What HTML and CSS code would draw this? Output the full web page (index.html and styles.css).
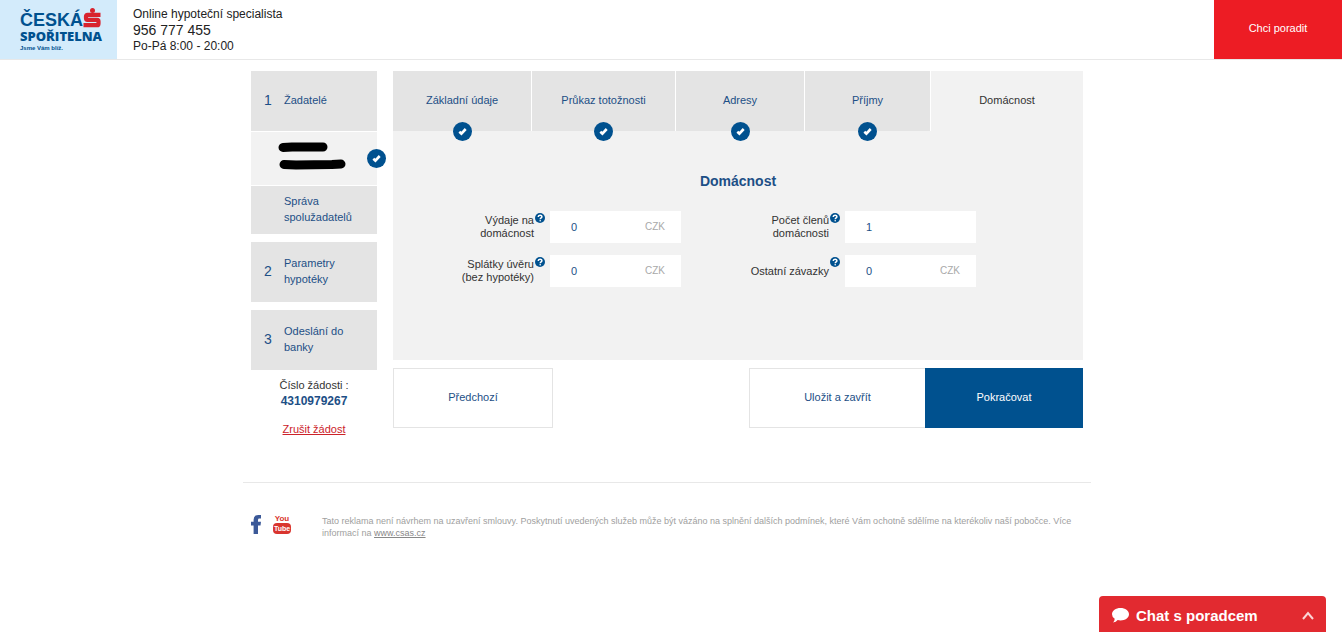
FILE: index.html
```html
<!DOCTYPE html>
<html lang="cs">
<head>
  <meta charset="UTF-8" />
  <meta name="viewport" content="width=device-width, initial-scale=1.0" />
  <title>Online hypotéka - Domácnost</title>
  <link rel="stylesheet" href="styles.css">
</head>
<body>
  <svg class="symboly" aria-hidden="true">
    <symbol id="fajfka" viewBox="0 0 19 19">
      <circle cx="9.5" cy="9.5" r="9.5" fill="#00518f" />
      <path d="M6.3 9.800l2.100 1.800 4.300-4.600" fill="none" stroke="#fff" stroke-width="2.6" />
    </symbol>
    <symbol id="otaznik" viewBox="0 0 10 10">
      <circle cx="5" cy="5" r="5" fill="#00518f" />
      <path d="M3.2 4C3.2 1.7 6.9 1.7 6.9 3.7 6.9 4.9 5.2 4.8 5.2 6.2" fill="none" stroke="#fff" stroke-width="1.5" />
      <circle cx="5.2" cy="7.8" r=".8" fill="#fff" />
    </symbol>
  </svg>

  <header class="hlavicka">
    <a class="logo" href="#">
      <span class="logo-radek">
        <span class="logo-ceska">ČESKÁ</span>
        <svg class="logo-znak" viewBox="0 0 18 20" aria-hidden="true">
          <circle cx="9.500" cy="2.600" r="2.500" fill="#d8232e" />
          <path d="M17.500 6.800H4.500Q3 6.800 3 8.300V10.300Q3 11.900 4.500 11.900H14Q15.500 11.900 15.500 13.400V15.400Q15.500 17.200 14 17.200H.5" fill="none" stroke="#d8232e" stroke-width="4.2" />
        </svg>
      </span>
      <span class="logo-sporitelna">SPOŘITELNA</span>
      <span class="logo-slogan">Jsme Vám blíž.</span>
    </a>
    <div class="kontakt">
      <div>Online hypoteční specialista</div>
      <div class="telefon">956 777 455</div>
      <div>Po-Pá 8:00 - 20:00</div>
    </div>
    <button type="button" class="poradit">Chci poradit</button>
  </header>

  <div class="stranka">
    <div class="obsah">
      <aside class="postup">
        <nav class="kroky">
          <div class="krok-skupina">
            <a class="krok" href="#"><span class="cislo">1</span><span>Žadatelé</span></a>
            <a class="zadatel" href="#" aria-label="Žadatel">
              <svg class="jmeno" viewBox="0 0 68 28" aria-hidden="true">
                <path d="M5 5.500L14 5H45M6 22.500L18 23 54 22.500 63 22" fill="none" stroke="#000" stroke-width="9" stroke-linecap="round" stroke-linejoin="round" />
              </svg>
              <svg class="hotovo"><use href="#fajfka" /></svg>
            </a>
            <a class="sprava" href="#">Správa spolužadatelů</a>
          </div>
          <a class="krok" href="#"><span class="cislo">2</span><span>Parametry hypotéky</span></a>
          <a class="krok" href="#"><span class="cislo">3</span><span>Odeslání do banky</span></a>
        </nav>
        <div class="zadost">
          <div>Číslo žádosti :</div>
          <div class="zadost-cislo">4310979267</div>
          <a class="zrusit" href="#">Zrušit žádost</a>
        </div>
      </aside>

      <main class="formular">
        <section class="panel">
          <nav class="zalozky">
            <a class="zalozka" href="#">Základní údaje<svg class="hotovo"><use href="#fajfka" /></svg></a>
            <a class="zalozka" href="#">Průkaz totožnosti<svg class="hotovo"><use href="#fajfka" /></svg></a>
            <a class="zalozka" href="#">Adresy<svg class="hotovo"><use href="#fajfka" /></svg></a>
            <a class="zalozka" href="#">Příjmy<svg class="hotovo"><use href="#fajfka" /></svg></a>
            <a class="zalozka aktivni" href="#">Domácnost</a>
          </nav>
          <h1>Domácnost</h1>
          <form class="pole-seznam">
            <div class="pole">
              <label for="vydaje">Výdaje na<br>domácnost</label>
              <svg class="napoveda"><use href="#otaznik" /></svg>
              <div class="vstup"><input type="text" id="vydaje" value="0" /><span>CZK</span></div>
            </div>
            <div class="pole">
              <label for="clenove">Počet členů<br>domácnosti</label>
              <svg class="napoveda"><use href="#otaznik" /></svg>
              <div class="vstup"><input type="text" id="clenove" value="1" /></div>
            </div>
            <div class="pole">
              <label for="splatky">Splátky úvěru<br>(bez hypotéky)</label>
              <svg class="napoveda"><use href="#otaznik" /></svg>
              <div class="vstup"><input type="text" id="splatky" value="0" /><span>CZK</span></div>
            </div>
            <div class="pole">
              <label for="zavazky">Ostatní závazky</label>
              <svg class="napoveda"><use href="#otaznik" /></svg>
              <div class="vstup"><input type="text" id="zavazky" value="0" /><span>CZK</span></div>
            </div>
          </form>
        </section>
        <div class="tlacitka">
          <button type="button" class="predchozi">Předchozí</button>
          <button type="button" class="ulozit">Uložit a zavřít</button>
          <button type="button" class="pokracovat">Pokračovat</button>
        </div>
      </main>
    </div>

    <footer class="paticka">
      <a href="#" aria-label="Facebook">
        <svg class="facebook" viewBox="0 0 10 19"><path d="M2.600 19V10.400H0V6.800H2.600V4.800Q2.600 0 7.300 0H10V3.600H8.300Q7 3.600 7 5V6.800H10L9.500 10.400H7V19Z" fill="#3b5998" /></svg>
      </a>
      <a class="youtube" href="#" aria-label="YouTube">
        <span class="yt-you">You</span>
        <span class="yt-tube">Tube</span>
      </a>
      <p>Tato reklama není návrhem na uzavření smlouvy. Poskytnutí uvedených služeb může být vázáno na splnění dalších podmínek, které Vám ochotně sdělíme na kterékoliv naší pobočce. Více informací na <a href="#">www.csas.cz</a></p>
    </footer>
  </div>

  <button type="button" class="chat">
    <svg class="bublina" viewBox="0 0 17 15" aria-hidden="true"><path d="M8.500 0C13.200 0 17 2.700 17 6.200S13.200 12.400 8.500 12.400Q7 12.400 5.700 12 4 14.300 1 14.600 2.700 12.800 2.700 10.700 0 9 0 6.200C0 2.700 3.800 0 8.500 0Z" fill="#fff" /></svg>
    <span>Chat s poradcem</span>
    <svg class="sipka" viewBox="0 0 12 9" aria-hidden="true"><path d="M1 8L6 2 11 8" fill="none" stroke="#fbd5d6" stroke-width="2" /></svg>
  </button>
</body>
</html>
```
FILE: styles.css
```css
* {
  box-sizing: border-box;
}
body {
  margin: 0;
  background-color: #fff;
  color: #333;
  font-family: "Liberation Sans", Arial, sans-serif;
  font-size: 11px;
  line-height: 16px;
}
a {
  color: #1d4f86;
  text-decoration: none;
}
button, input {
  font-family: inherit;
  font-size: 11px;
}
button {
  cursor: pointer;
}
.symboly {
  position: absolute;
  width: 0;
  height: 0;
}

/* hlavička */
.hlavicka {
  display: flex;
  height: 60px;
  border-bottom: 1px solid #e8e8e8;
}
.logo {
  width: 117px;
  padding: 8px 0 0 20px;
  background-color: #d3ebfb;
  color: #00518f;
  font-weight: bold;
  display: flex;
  flex-direction: column;
}
.logo-radek {
  display: flex;
  height: 21px;
}
.logo-ceska {
  font-size: 18px;
  line-height: 24px;
}
.logo-znak {
  width: 18px;
  height: 20px;
}
.logo-sporitelna {
  font-family: "Open Sans", "Liberation Sans", sans-serif;
  font-size: 13px;
  font-weight: 800;
  line-height: 15px;
}
.logo-slogan {
  font-size: 6px;
  line-height: 8px;
}
.kontakt {
  padding: 6px 16px;
  font-size: 12px;
  color: #222;
}
.telefon {
  font-size: 14px;
}
.poradit {
  width: 128px;
  height: 59px;
  padding-bottom: 4px;
  margin-left: auto;
  border: none;
  background-color: #ed1c24;
  color: #fff;
}

.stranka {
  max-width: 856px;
  margin: 0 auto;
  padding: 11px 8px 0 0;
}
.obsah {
  display: flex;
  gap: 16px;
  padding: 0 8px;
}

/* levé menu */
.postup {
  width: 126px;
  flex-shrink: 0;
}
.kroky {
  display: flex;
  flex-direction: column;
  gap: 8px;
}
.krok-skupina {
  display: flex;
  flex-direction: column;
  gap: 1px;
}
.krok {
  display: flex;
  align-items: center;
  min-height: 60px;
  padding: 0 24px 2px 13px;
  background-color: #e4e4e4;
}
.cislo {
  width: 20px;
  flex-shrink: 0;
  font-size: 14px;
}
.zadatel {
  position: relative;
  height: 53px;
  padding: 10px 27px;
  background-color: #f2f2f2;
}
.jmeno {
  display: block;
  width: 68px;
  height: 28px;
}
.hotovo {
  position: absolute;
  width: 19px;
  height: 19px;
}
.zadatel .hotovo {
  right: -9px;
  top: 17px;
}
.sprava {
  padding: 7px 24px 9px 33px;
  background-color: #e4e4e4;
}
.zadost {
  padding-top: 7px;
  text-align: center;
}
.zadost-cislo {
  margin-bottom: 12px;
  font-size: 12px;
  font-weight: bold;
  color: #1d4f86;
}
.zrusit {
  color: #cc2229;
  text-decoration: underline;
}

/* formulář */
.formular {
  flex: 1;
}
.panel {
  min-height: 289px;
  background-color: #f2f2f2;
}
.zalozky {
  display: grid;
  grid-template-columns: 139fr 144fr 129fr 126fr 152fr;
}
.zalozka {
  position: relative;
  display: flex;
  align-items: center;
  justify-content: center;
  height: 60px;
  padding-bottom: 2px;
  background-color: #e4e4e4;
  border-right: 1px solid #fff;
}
.zalozka .hotovo {
  bottom: -10px;
}
.zalozka.aktivni {
  background-color: #f2f2f2;
  border-right: none;
  color: #333;
}
h1 {
  margin: 41px 0 21px;
  text-align: center;
  font-size: 14px;
  line-height: 18px;
  color: #1d4f86;
}
.pole-seznam {
  display: grid;
  grid-template-columns: 1fr 1fr;
  gap: 12px 7px;
  padding-right: 107px;
}
.pole {
  display: flex;
  align-items: center;
  height: 32px;
}
.pole label {
  flex: 1;
  text-align: right;
  line-height: 13px;
}
.napoveda {
  width: 10px;
  height: 10px;
  margin: 2px 5px 0 1px;
  align-self: flex-start;
}
.vstup {
  display: flex;
  align-items: center;
  width: 131px;
  height: 32px;
  padding: 0 16px 0 21px;
  background-color: #fff;
}
.vstup input {
  flex: 1;
  min-width: 0;
  padding: 0;
  border: none;
  background: none;
  color: #1d4f86;
}
.vstup span {
  font-size: 10px;
  color: #a9a9a9;
}
.tlacitka {
  display: flex;
  margin-top: 8px;
}
.tlacitka button {
  height: 60px;
  padding-bottom: 3px;
  border: 1px solid #e4e4e4;
  background-color: #fff;
  color: #1d4f86;
}
.tlacitka .predchozi {
  width: 160px;
  margin-right: auto;
}
.tlacitka .ulozit {
  width: 176px;
  border-right: none;
}
.tlacitka .pokracovat {
  width: 158px;
  border: none;
  background-color: #00518f;
  color: #fff;
}

/* patička */
.paticka {
  display: flex;
  align-items: flex-start;
  margin-top: 45px;
  padding: 32px 8px 0;
  border-top: 1px solid #e8e8e8;
}
.facebook {
  display: block;
  width: 10px;
  height: 19px;
}
.youtube {
  display: flex;
  flex-direction: column;
  align-items: center;
  width: 18px;
  margin: 0 31px 0 12px;
  font-weight: bold;
  color: #d9352f;
}
.yt-you {
  font-size: 8px;
  line-height: 8px;
}
.yt-tube {
  width: 18px;
  border-radius: 4px;
  background-color: #d9352f;
  color: #fff;
  font-size: 7px;
  line-height: 11px;
  text-align: center;
}
.paticka p {
  flex: 1;
  margin: 0;
  font-size: 9px;
  line-height: 12px;
  color: #a0a0a0;
}
.paticka p a {
  color: #888;
  text-decoration: underline;
}

.chat {
  position: fixed;
  right: 16px;
  bottom: 0;
  display: flex;
  align-items: center;
  width: 227px;
  height: 36px;
  padding: 3px 12px 0 13px;
  border: none;
  border-radius: 4px 4px 0 0;
  background-color: #e22a30;
  color: #fff;
  font-size: 15px;
  font-weight: bold;
}
.bublina {
  width: 17px;
  height: 15px;
  margin-right: 7px;
}
.sipka {
  width: 12px;
  height: 9px;
  margin-left: auto;
}
@media (max-width: 800px) {
  .obsah {
    flex-direction: column;
  }
  .pole-seznam {
    grid-template-columns: 1fr;
  }
}
```
